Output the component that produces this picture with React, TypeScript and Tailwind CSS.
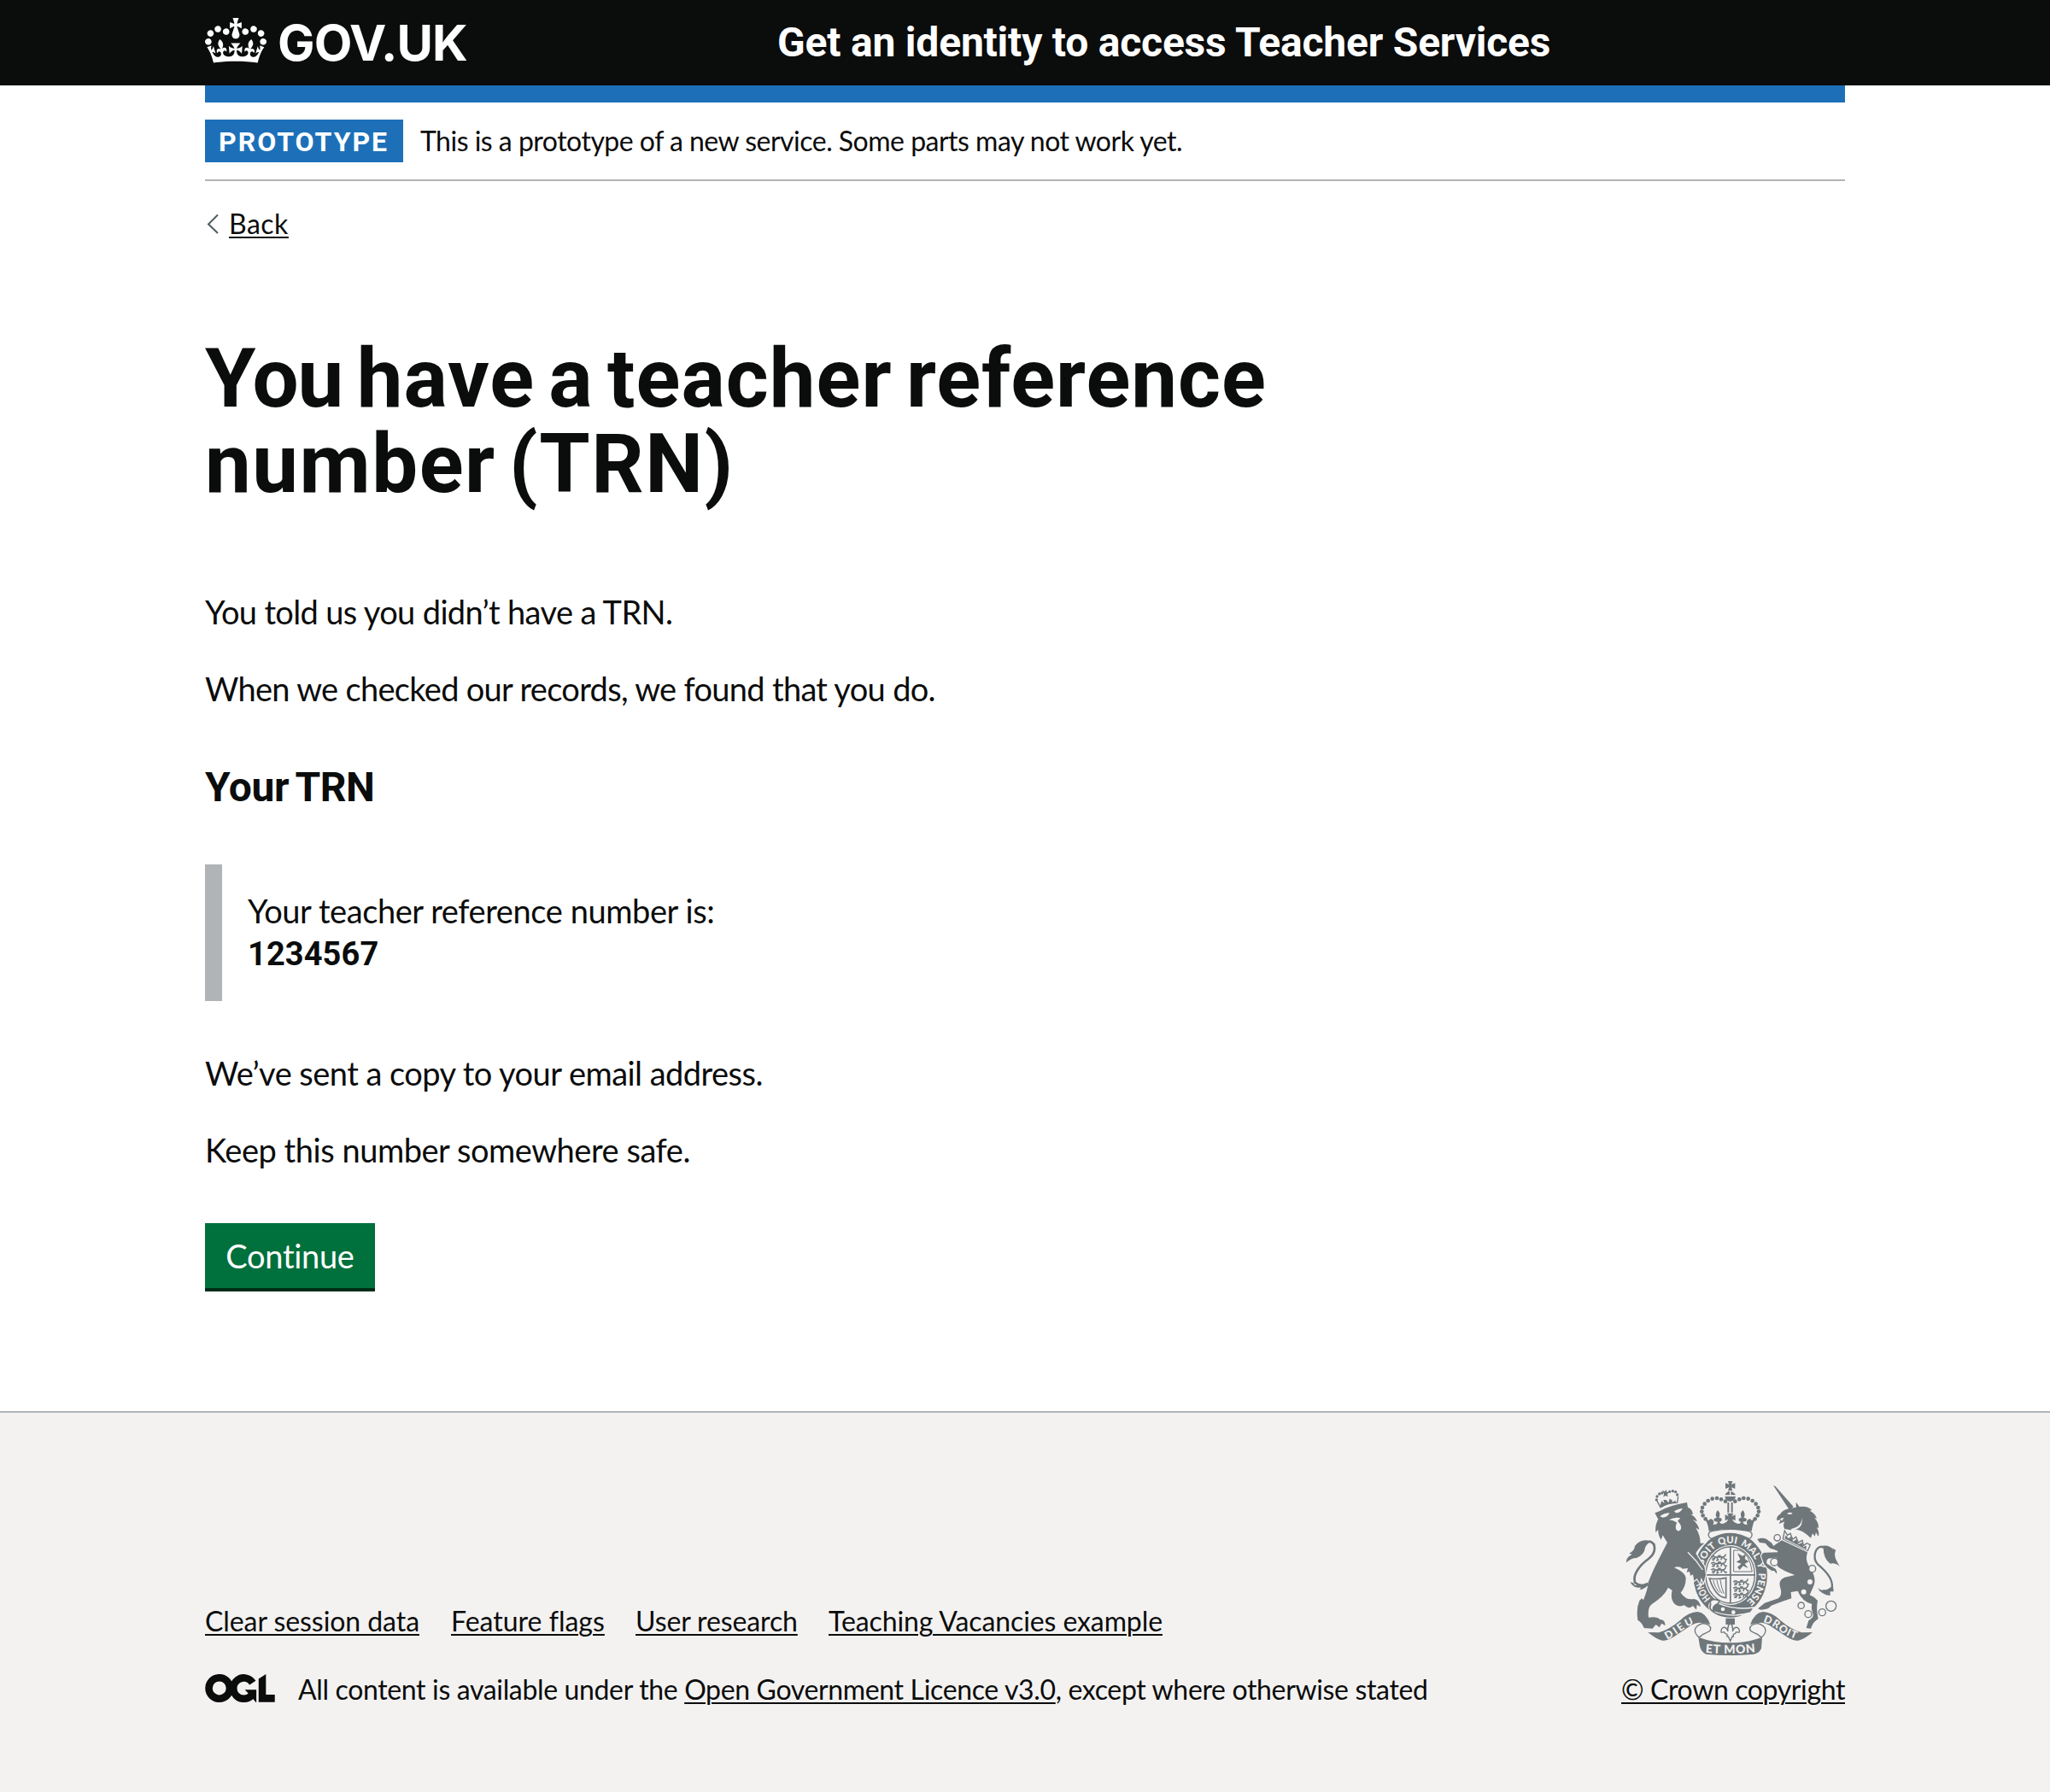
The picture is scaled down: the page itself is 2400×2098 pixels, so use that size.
import type { ReactNode } from "react";

const regular = "font-['Lato','Open_Sans',sans-serif] font-normal [font-variant-ligatures:none]";
const bold = "font-['Roboto','Liberation_Sans',sans-serif] font-bold";

function FooterLink({ children, className = "" }: { children: ReactNode; className?: string }) {
  return (
    <a href="#" className={`underline decoration-2 underline-offset-[3px] ${className}`}>
      {children}
    </a>
  );
}

function CrownIcon() {
  return (
    <svg viewBox="0 0 132 97" className="h-[53px] w-[72px] shrink-0" fill="currentColor" aria-hidden="true">
      <path d="M25 30.2c3.5 1.5 7.7-.2 9.1-3.7 1.5-3.6-.2-7.8-3.9-9.2-3.6-1.4-7.6.3-9.1 3.9-1.4 3.5.3 7.5 3.9 9zM9 39.5c3.6 1.5 7.8-.2 9.2-3.7 1.5-3.6-.2-7.8-3.9-9.1-3.6-1.5-7.6.2-9.1 3.8-1.4 3.5.3 7.5 3.8 9zM4.4 57.2c3.5 1.5 7.7-.2 9.1-3.8 1.5-3.6-.2-7.7-3.9-9.1-3.5-1.5-7.6.3-9.1 3.8-1.4 3.5.3 7.6 3.9 9.1zm38.3-21.4c3.5 1.5 7.7-.2 9.1-3.8 1.5-3.6-.2-7.7-3.9-9.1-3.6-1.5-7.6.3-9.1 3.8-1.3 3.6.4 7.7 3.9 9.1zm64.4-5.6c-3.6 1.5-7.8-.2-9.1-3.7-1.5-3.6.2-7.8 3.8-9.2 3.6-1.4 7.7.3 9.2 3.9 1.3 3.5-.4 7.5-3.9 9zm15.9 9.3c-3.6 1.5-7.7-.2-9.1-3.7-1.5-3.6.2-7.8 3.7-9.1 3.6-1.5 7.7.2 9.2 3.8 1.5 3.5-.3 7.5-3.8 9zm4.7 17.7c-3.6 1.5-7.8-.2-9.2-3.8-1.5-3.6.2-7.7 3.9-9.1 3.6-1.5 7.7.3 9.2 3.8 1.3 3.5-.4 7.6-3.9 9.1zM89.3 35.8c-3.6 1.5-7.8-.2-9.2-3.8-1.4-3.6.2-7.7 3.9-9.1 3.6-1.5 7.7.3 9.2 3.8 1.4 3.6-.3 7.7-3.9 9.1zM69.7 17.7l8.9 4.7V9.3l-8.9 2.8c-.2-.3-.5-.6-.9-.9L72.4 0H59.6l3.5 11.2c-.3.3-.6.5-.9.9l-8.8-2.8v13.1l8.8-4.7c.3.3.6.7.9.9l-5 15.4v.1c-.2.8-.4 1.6-.4 2.4 0 4.1 3.1 7.5 7 8.1h.2c.3 0 .7.1 1 .1.4 0 .7 0 1-.1h.2c4-.6 7.1-4.1 7.1-8.1 0-.8-.1-1.7-.4-2.4V34l-5.1-15.4c.4-.2.7-.6 1-.9zM66 92.8c16.9 0 32.8 1.1 47.1 3.2 4-16.9 8.9-26.7 14-33.5l-9.6-3.4c1 4.9 1.1 7.2 0 10.2-1.5-1.4-3-4.3-4.2-8.7L108.6 76c2.8-2 5-3.2 7.5-3.3-4.4 9.4-10 11.9-13.6 11.2-4.3-.8-6.3-4.6-5.6-7.9 1-4.7 5.7-5.9 8-.5 4.3-8.7-3-11.4-7.6-8.8 7.1-7.2 7.9-13.5 2.1-21.1-8 6.1-8.1 12.3-4.5 20.8-4.7-5.4-12.1-2.5-9.5 6.2 3.4-5.2 7.9-2 7.2 3.1-.6 4.3-6.4 7.8-13.5 7.2-10.3-.9-10.9-8-11.2-13.8 2.5-.5 7.1 1.8 11 7.3L80.2 60c-4.1 4.4-8 5.3-12.3 5.4 1.4-4.4 8-11.6 8-11.6H55.5s6.4 7.2 7.9 11.6c-4.2-.1-8-1-12.3-5.4l1.4 16.4c3.9-5.5 8.5-7.7 10.9-7.3-.3 5.8-.9 12.8-11.1 13.8-7.2.6-12.9-2.9-13.5-7.2-.7-5 3.8-8.3 7.1-3.1 2.7-8.7-4.6-11.6-9.4-6.2 3.7-8.5 3.6-14.7-4.6-20.8-5.8 7.6-5 13.9 2.2 21.1-4.7-2.6-11.9.1-7.7 8.8 2.3-5.5 7.1-4.2 8.1.5.7 3.3-1.3 7.1-5.7 7.9-3.5.7-9-1.8-13.5-11.2 2.5.1 4.7 1.3 7.5 3.3l-4.7-15.4c-1.2 4.4-2.7 7.2-4.3 8.7-1.1-3-.9-5.3 0-10.2l-9.5 3.4c5 6.9 9.9 16.7 14 33.5 14.8-2.1 30.8-3.2 47.7-3.2z" />
    </svg>
  );
}

function LicenceLogo() {
  return (
    <svg viewBox="0 0 483.2 195.7" className="-mt-1 h-[33px] w-[82px] shrink-0" fill="none" stroke="currentColor" strokeWidth="50.7" aria-hidden="true">
      <circle cx="97.8" cy="97.8" r="72.5" />
      <path d="M329.5 60A72.5 72.5 0 1 0 321 148" />
      <path d="M275 107.800H355V195.600H352L299 133Z" fill="currentColor" stroke="none" />
      <path d="M421.500 0V142.800H483.200V193.500H370.800V32.300Z" fill="currentColor" stroke="none" />
    </svg>
  );
}

const beads: [number, number][] = [
  [420, 143], [405, 136], [390, 132], [374, 134], [359, 141], [347, 152], [339, 165], [337, 179], [341, 193], [350, 205],
];

const garterWords = [
  { id: "garter-1", word: "HON", d: "M368.8 483.9A100 112 0 0 1 339.6 427.2", length: 63 },
  { id: "garter-2", word: "SOIT", d: "M341.9 367.4A100 112 0 0 1 390.1 303.1", length: 80 },
  { id: "garter-3", word: "QUI", d: "M397.9 298.8A100 112 0 0 1 461.2 293.3", length: 63 },
  { id: "garter-4", word: "MAL", d: "M472.8 297.4A100 112 0 0 1 525.3 349.5", length: 74 },
  { id: "garter-5", word: "Y", d: "M529.7 360A100 112 0 0 1 535.8 386", length: 22 },
  { id: "garter-6", word: "PENSE", d: "M536.8 394.2A100 112 0 0 1 490 497", length: 113 },
];

function Ribbon() {
  return (
    <>
      <path d="M148 603L186 604Q222 594 262 560Q292 532 322 531Q352 534 367 576Q354 572 340 571Q322 566 300 578L240 618Q218 633 198 632Q178 628 148 603Z" />
      <path d="M340 572Q369 575 368 592C366 606 340 604 334 617Q326 622 322 616C308 600 308 582 340 572Z" fill="none" strokeWidth="4" stroke="#6f777b" />
    </>
  );
}

function Lions({ x, y }: { x: number; y: number }) {
  return (
    <g transform={`translate(${x} ${y}) scale(0.9)`}>
      {[0, 25, 50].map((dy) => (
        <path key={dy} transform={`translate(0 ${dy})`} d="M2 6L12 2L18 7L50 6Q60 1 58 -5M18 8L12 18L5 17M24 9L30 18L22 20M45 8L40 18M50 8L58 17L64 15M6 9L14 12M28 2L40 1" fill="none" stroke="#6f777b" strokeWidth="5" />
      ))}
    </g>
  );
}

function RoyalArms() {
  return (
    <svg viewBox="72 66 750 618" className="h-[206px] w-[250px]" fill="#6f777b" role="img" aria-label="Royal coat of arms">
      <defs>
        {garterWords.map(({ id, d }) => (
          <path key={id} id={id} d={d} />
        ))}
        <path id="dieu" d="M215 629Q244 614 264 599Q288 580 318 571" />
        <path id="droit" d="M552 567Q586 578 608 596Q634 617 676 629" />
        <path id="mon" d="M340 673Q437 684 540 671" />
      </defs>

      {/* Crown */}
      <path d="M429 72H445L441 84L454 79V99L441 94L445 106H429L433 94L420 99V79L433 84ZM431 108H435V121H418Q422 112 431 108ZM439 108Q452 112 456 121H439ZM418 126H456Q454 142 437 144Q420 142 418 126Z" />
      <path d="M427 147H433V182H427ZM440 147H446V182H440Z" />
      {beads.map(([cx, cy]) => (
        <g key={cx}>
          <circle cx={cx} cy={cy} r="7" />
          <circle cx={874 - cx} cy={cy} r="7" />
        </g>
      ))}
      <path d="M348 204L362 210Q366 202 374 207Q384 215 376 224Q391 226 393 215Q379 215 379 206Q385 199 390 202Q381 186 393 174Q405 186 397 202Q404 199 408 207Q406 215 399 216Q405 228 424 215Q430 210 428 206L419 211V190L431 196L426 185H448L443 196L455 190V211L446 206Q444 210 450 215Q469 228 475 216Q468 215 466 207Q470 199 477 202Q469 186 481 174Q493 186 484 202Q489 199 495 206Q495 215 481 215Q483 226 498 224Q490 215 500 207Q508 202 512 210L526 204Q516 220 512 248Q437 232 362 248Q359 222 348 204Z" />

      {/* Garter and shield */}
      <ellipse cx="437" cy="402" rx="130" ry="149" />
      <path d="M372 248Q437 234 502 248Q517 252 512 266Q508 276 498 272Q437 240 376 272Q366 276 362 266Q357 252 372 248Z" fill="#f3f2f1" stroke="#6f777b" strokeWidth="4" />
      <ellipse cx="437" cy="402" rx="92" ry="105" fill="#f3f2f1" />
      <ellipse cx="437" cy="402" rx="86" ry="99" fill="none" stroke="#6f777b" strokeWidth="4" />
      <path d="M435 302H440V500H435ZM350 399H524V404H350Z" />
      <Lions x={368} y={333} />
      <Lions x={446} y={420} />
      <path d="M449 315H470Q505 328 514 390H449Z" fill="none" stroke="#6f777b" strokeWidth="3" />
      <path d="M462 325L480 335L492 328L488 345L502 355L488 362L500 378L482 370L470 384L462 374L476 362L458 356L472 347Z" />
      <path d="M364 414Q392 418 422 412V482Q385 480 364 414Z" fill="none" stroke="#6f777b" strokeWidth="5" />
      <path d="M377 420Q384 450 400 464M390 420Q395 450 408 466M402 419Q405 445 415 468" fill="none" stroke="#6f777b" strokeWidth="3" />
      <g fill="#f3f2f1" fontFamily="Lato, sans-serif" fontWeight="900" fontSize="34">
        {garterWords.map(({ id, word, length }) => (
          <text key={id}>
            <textPath href={`#${id}`} textLength={length} lengthAdjust="spacingAndGlyphs">{word}</textPath>
          </text>
        ))}
      </g>
      <path d="M376 490Q437 528 520 516L508 534Q437 556 366 525Q355 505 376 490Z" stroke="#f3f2f1" strokeWidth="4" />
      <path d="M385 488Q362 486 368 506Q360 524 380 530Q372 516 384 508Q400 500 398 492Z" fill="#f3f2f1" stroke="#6f777b" strokeWidth="5" />
      <circle cx="411" cy="522" r="7" fill="#f3f2f1" />
      <circle cx="448" cy="533" r="7" fill="#f3f2f1" />

      {/* Lion */}
      <g>
        <path d="M180 142L192 164Q215 148 251 148L254 126" fill="none" stroke="#6f777b" strokeWidth="4" />
        <path d="M190 158L196 142L206 150L202 138H212L220 148L224 134L232 138L234 146L244 140L248 150Q215 150 194 166Z" />
        <path d="M198 104L208 109L211 101L215 111L223 111L216 118L218 127L209 123L202 128L204 117Z" />
        {[[178, 138], [180, 126], [188, 117], [197, 114], [224, 109], [235, 107], [245, 110], [251, 120]].map(([cx, cy]) => (
          <circle key={cx} cx={cx} cy={cy} r="5" />
        ))}
        <path paintOrder="stroke" stroke="#f3f2f1" strokeWidth="7" d="M172 184L188 178Q220 158 285 147L288 164Q304 170 306 189L297 188Q317 198 320 214L306 208Q326 226 328 243L316 236Q332 262 332 290L346 290Q326 306 316 326Q330 350 346 372L351 402L343 428L335 410L331 432L320 414L310 422L306 400L297 404L294 390L284 392L288 378L270 380Q256 368 240 376Q278 392 281 412Q282 440 263 464Q282 492 310 486Q330 490 333 514L320 506L318 524L306 510Q290 524 276 508Q255 516 242 504Q225 486 233 456L219 446Q205 476 162 504Q146 514 150 551Q180 546 190 558Q208 558 209 580L196 572L188 586L176 576L164 590L134 588Q128 570 112 560Q106 520 118 492L126 484L132 490Q150 444 148 430Q166 384 178 362Q194 330 216 288L206 272L200 262L194 278Q183 262 184 242L175 252Q172 226 184 206Z" />
        <path d="M190 196Q204 184 224 184Q216 200 200 200ZM240 178Q258 168 270 168Q262 184 246 184ZM222 208Q244 196 262 202L252 212Q270 230 262 244Q252 252 246 240Q244 224 250 218Q240 210 222 208Z" fill="#f3f2f1" />
        <path d="M288 322Q318 350 340 384" fill="none" stroke="#f3f2f1" strokeWidth="4" />
        <path d="M152 283C180 290 176 326 150 345C118 368 94 400 102 428Q124 446 148 432" fill="none" stroke="#6f777b" strokeWidth="8" />
        <path d="M160 284Q124 270 102 300Q100 318 82 326L92 330Q70 340 72 358Q90 342 108 342Q136 330 138 306Q142 292 160 284ZM86 428Q96 426 102 438L152 434Q136 452 118 454L124 446Q100 450 86 428Z" />
      </g>

      {/* Unicorn */}
      <g>
        <path d="M588 87L596 91L659 162L645 174Z" />
        <path d="M668 146L680 162Q708 158 724 174L716 176Q736 186 741 204L732 200Q750 220 746 238L740 234Q752 252 746 266L738 252L734 266L726 256L720 272Q680 232 648 244L628 240Q620 226 628 214L618 218L608 222L614 208L601 210Q598 196 612 188Q622 172 646 168L668 164Z" />
        <path d="M636 186Q648 178 656 186Q646 192 636 186ZM612 204L626 200L618 212ZM688 200Q690 232 650 240L656 246Q696 238 688 200Z" fill="#f3f2f1" />
        <path d="M628 246L638 262L648 256L656 276L668 268L676 288L690 280L694 298L706 290L718 296L708 318L622 276Z" fill="#f3f2f1" stroke="#6f777b" strokeWidth="4" />
        <path d="M632 262L642 274L650 266L658 284L670 276L676 294L690 288L694 304L704 298L704 312L628 274Z" />
        <g paintOrder="stroke" stroke="#f3f2f1" strokeWidth="7">
          <path d="M606 340L570 344Q562 352 566 362L596 380Q602 388 600 398Q590 382 584 388Q566 378 556 364L546 336Q548 322 562 323L602 322ZM618 280L708 322Q700 350 712 368Q742 410 730 440L716 472Q732 478 744 492Q738 520 746 556Q728 566 720 590L704 588L712 562Q730 552 728 540Q720 520 724 504Q688 494 674 458L650 462L652 484Q610 498 580 510Q572 524 544 524L534 520L558 500L606 484Q622 470 612 444Q604 420 628 410L664 402Q616 384 604 372Q594 350 604 318L590 312Q578 312 572 304L560 290L540 288L532 276Q556 266 572 282Q586 290 588 300Z" />
        </g>
        {[[717, 426], [695, 461]].map(([cx, cy]) => (
          <circle key={cx} cx={cx} cy={cy} r="9" fill="#f3f2f1" />
        ))}
        {[[602, 271, 11], [592, 356, 13], [725, 380, 12], [686, 509, 11], [711, 539, 12], [760, 533, 12], [791, 511, 18]].map(([cx, cy, r]) => (
          <ellipse key={cx} cx={cx} cy={cy} rx={r} ry={r} fill="#f3f2f1" stroke="#6f777b" strokeWidth="4" />
        ))}
        <path d="M760 302C732 304 726 344 744 364C766 382 800 414 794 446Q782 462 762 456" fill="none" stroke="#6f777b" strokeWidth="7" />
        <path d="M744 304Q780 290 800 314L796 306L808 316Q796 334 822 372Q806 358 788 362Q764 344 764 308ZM744 448Q756 456 768 458L798 440L800 460L788 460V474Q758 472 744 448Z" />
      </g>

      {/* Motto */}
      <Ribbon />
      <g transform="translate(874 0) scale(-1 1)">
        <Ribbon />
      </g>
      <path d="M325 620Q378 640 437 640Q496 640 549 620L546 660Q538 677 520 680Q437 688 352 680Q336 675 330 652Z" />
      <path d="M421 554H453V576H421Z" />
      <path d="M437 570Q448 580 445 600Q450 584 462 586Q472 592 468 604L458 602Q456 608 448 610V618H444L437 634L430 618H426V610Q418 608 416 602L406 604Q402 592 412 586Q424 584 429 600Q426 580 437 570Z" fill="#f3f2f1" stroke="#6f777b" strokeWidth="4" />
      <g fill="#f3f2f1" fontFamily="Lato, sans-serif" fontWeight="900" fontSize="37">
        <text><textPath href="#dieu" textLength="110">DIEU</textPath></text>
        <text><textPath href="#droit" textLength="130">DROIT</textPath></text>
        <text fontSize="42"><textPath href="#mon" startOffset="10" textLength="176">ET MON</textPath></text>
      </g>
    </svg>
  );
}

export default function App() {
  return (
    <div className={`flex min-h-[2098px] flex-col bg-white text-[#0b0c0c] ${regular}`}>
      <header className="h-[100px] bg-[#0b0c0c] text-white">
        <div className="mx-auto flex h-full w-[1920px] items-center">
          <a href="#" className="flex w-[670px] items-center">
            <span className="-mt-[5px]">
              <CrownIcon />
            </span>
            <span className="ml-[13px] font-['Inter',sans-serif] text-[58px] leading-none font-bold tracking-[-0.9px]">GOV.UK</span>
          </a>
          <a href="#" className={`text-[48px] leading-none tracking-[-0.21px] ${bold}`}>
            Get an identity to access Teacher Services
          </a>
        </div>
      </header>

      <div className="mx-auto flex w-[1920px] grow flex-col">
        <div className="h-5 bg-[#1d70b8]" />
        <div className="flex items-center border-b-2 border-[#b1b4b6] py-5">
          <strong className={`h-[50px] w-[232px] bg-[#1d70b8] pt-px pl-4 text-[32px] leading-[50px] tracking-[2px] text-white ${bold}`}>PROTOTYPE</strong>
          <span className="ml-5 pb-px text-[32px] leading-10 tracking-[-0.51px]">This is a prototype of a new service. Some parts may not work yet.</span>
        </div>

        <a href="#" className="mt-[29px] flex h-10 items-center text-[32px] leading-10">
          <svg viewBox="0 0 16 24" className="mt-0.5 ml-0.5 h-6 w-4" fill="none" stroke="#505a5f" strokeWidth="2" aria-hidden="true">
            <path d="M13 1.500L2 12.500L13 23" />
          </svg>
          <span className="ml-2.5 pt-px tracking-[0.5px] underline decoration-2 underline-offset-[3px]">Back</span>
        </a>

        <main className="mt-[111px] flex flex-col items-start text-[38px] leading-[50px]">
          <h1 className={`pt-px text-[96px] leading-[100px] ${bold}`}>
            <span className="block tracking-[1px] [word-spacing:-8.5px]">
              <span className="tracking-[-1px]">You</span> have a teacher reference
            </span>
            <span className="block tracking-[1.5px] [word-spacing:-10px]">number (TRN)</span>
          </h1>
          <p className="mt-[98px] tracking-[-0.64px]">You told us you didn’t have a TRN.</p>
          <p className="mt-10 tracking-[-0.69px]">When we checked our records, we found that you do.</p>
          <h2 className={`mt-[66px] text-[48px] leading-[50px] tracking-[-0.4px] [word-spacing:-3px] ${bold}`}>Your TRN</h2>
          <div className="mt-[65px] h-40 border-l-[20px] border-[#b1b4b6] pt-[29px] pl-[30px]">
            <p className="tracking-[-0.42px]">Your teacher reference number is:</p>
            <strong className={`block leading-[52px] tracking-[0.1px] ${bold}`}>1234567</strong>
          </div>
          <p className="mt-[59px] tracking-[-0.54px]">We’ve sent a copy to your email address.</p>
          <p className="mt-10 tracking-[-0.46px]">Keep this number somewhere safe.</p>
          <button className="mt-[61px] h-20 w-[199px] border-b-4 border-[#002d18] bg-[#00703c] tracking-[-0.3px] text-white">Continue</button>
        </main>
      </div>

      <footer className="h-[446px] border-t-2 border-[#b1b4b6] bg-[#f3f2f1] text-[32px] leading-10">
        <div className="mx-auto flex w-[1920px] items-end justify-between pt-[78px]">
          <div>
            <div className="flex">
              <FooterLink className="w-[288px] tracking-[-0.07px]">Clear session data</FooterLink>
              <FooterLink className="w-[216px]">Feature flags</FooterLink>
              <FooterLink className="w-[226px] tracking-[-0.12px]">User research</FooterLink>
              <FooterLink className="tracking-[-0.1px]">Teaching Vacancies example</FooterLink>
            </div>
            <div className="mt-10 flex items-center">
              <LicenceLogo />
              <span className="ml-[27px] tracking-[-0.35px]">
                All content is available under the <FooterLink>Open Government Licence v3.0</FooterLink>, except where otherwise stated
              </span>
            </div>
          </div>
          <div className="flex flex-col items-end">
            <div className="mr-1.5">
              <RoyalArms />
            </div>
            <FooterLink className="mt-5 tracking-[-0.38px]">© Crown copyright</FooterLink>
          </div>
        </div>
      </footer>
    </div>
  );
}
